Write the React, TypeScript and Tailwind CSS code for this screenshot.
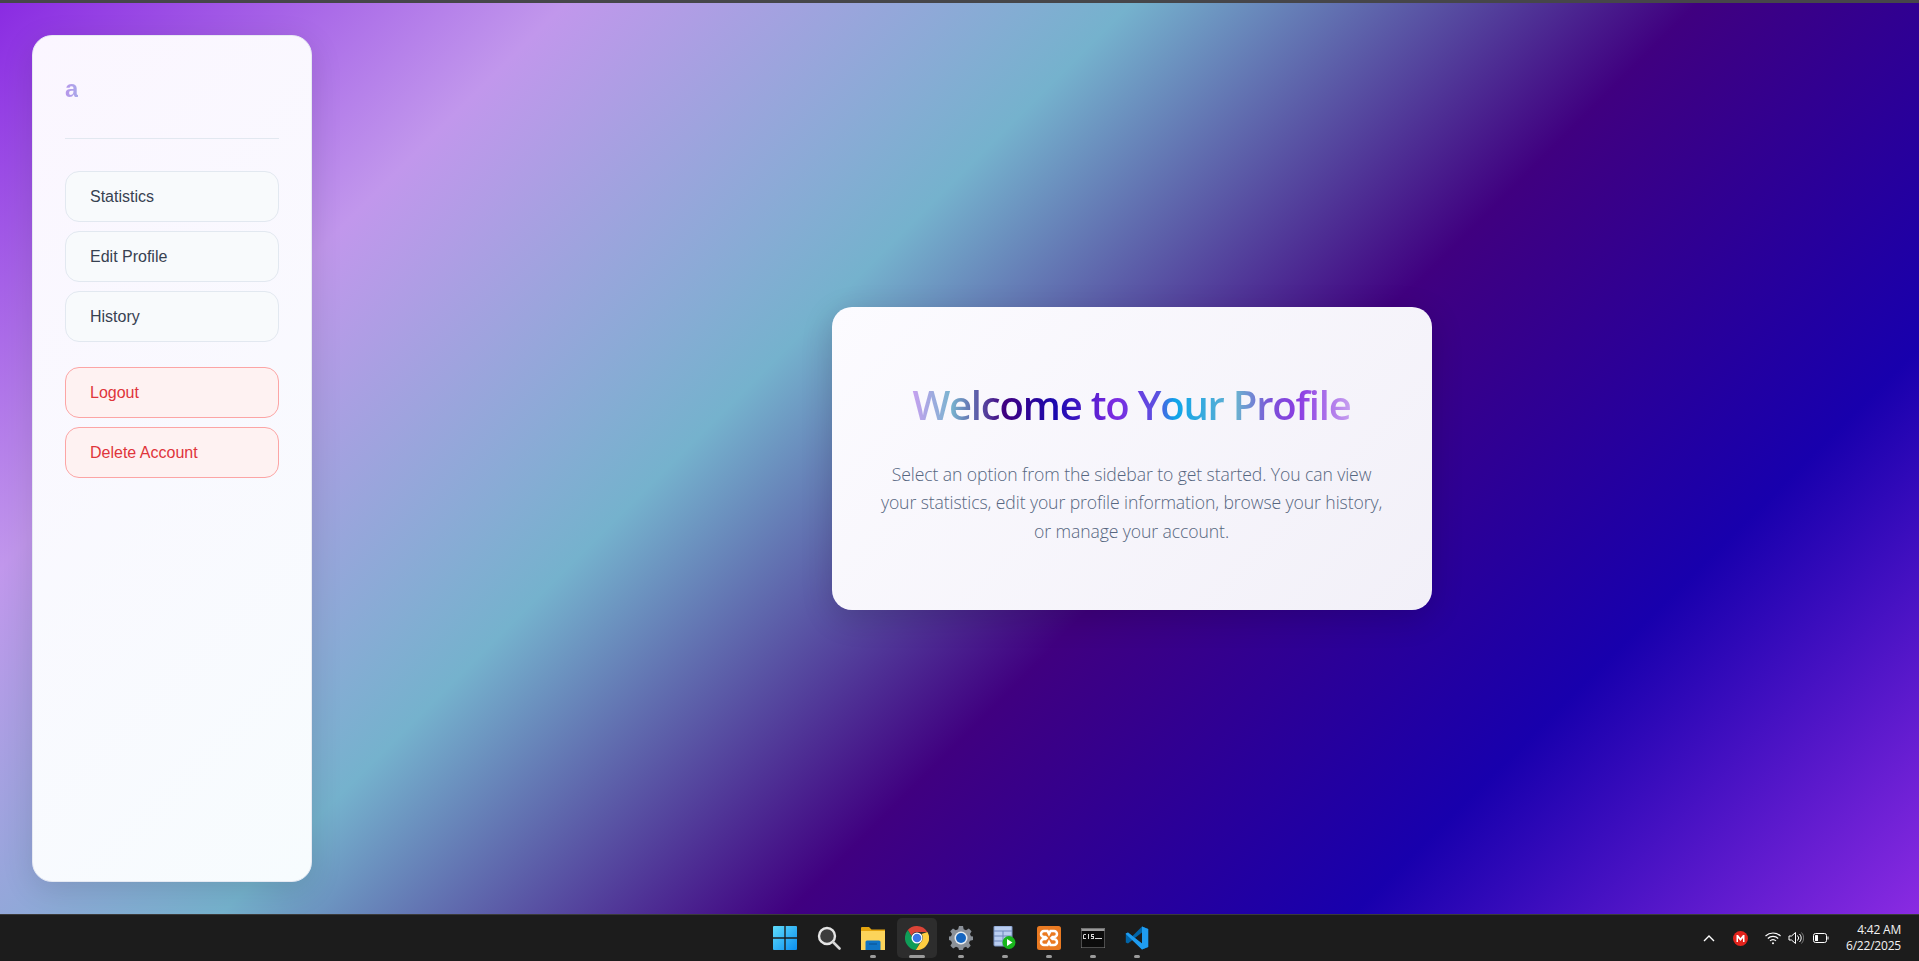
import React from "react";

const navItems = ["Statistics", "Edit Profile", "History"];
const dangerItems = ["Logout", "Delete Account"];

const WindowsIcon = () => (
  <svg width="24" height="24" viewBox="0 0 24 24">
    <defs>
      <linearGradient id="win" x1="0" y1="0" x2="1" y2="1">
        <stop offset="0" stopColor="#5fdcfb" />
        <stop offset="1" stopColor="#0b8ef0" />
      </linearGradient>
    </defs>
    <path fill="url(#win)" d="M0 1a1 1 0 0 1 1-1h10.3v11.3H0zM12.7 0H23a1 1 0 0 1 1 1v10.3H12.7zM0 12.7h11.3V24H1a1 1 0 0 1-1-1zM12.7 12.7H24V23a1 1 0 0 1-1 1H12.7z" />
  </svg>
);

const SearchIcon = () => (
  <svg width="24" height="24" viewBox="0 0 24 24" fill="none">
    <circle cx="10" cy="10" r="8" fill="#3c3c3c" stroke="#e4e4e4" strokeWidth="2.4" />
    <path d="M16 16l6.5 6.5" stroke="#d6d6d6" strokeWidth="2.6" strokeLinecap="round" />
  </svg>
);

const FolderIcon = () => (
  <svg width="24" height="24" viewBox="0 0 24 24">
    <path fill="#e5a50f" d="M0 2a1 1 0 0 1 1-1h7l2.5 2.5H24V9H0z" />
    <path fill="#fcd45a" d="M0 5h24v19H0z" />
    <path fill="#0f74c4" d="M4.500 16a1.500 1.500 0 0 1 1.500-1.500h12a1.500 1.500 0 0 1 1.500 1.500v8h-15z" />
    <path fill="#0a4f8f" d="M8 17.500h8v1H8z" />
  </svg>
);

const ChromeIcon = () => (
  <svg width="24" height="24" viewBox="0 0 48 48">
    <path fill="#db4437" d="M24 0a24 24 0 0 1 20.800 12H24a12 12 0 0 0-11.300 8L5.600 8.100A24 24 0 0 1 24 0z" />
    <path fill="#0f9d58" d="M3.200 36A24 24 0 0 1 5.600 8.100L15 24a10 10 0 0 0 14.500 9.500L21.500 48A24 24 0 0 1 3.200 36z" />
    <path fill="#ffcd40" d="M44.800 12A24 24 0 0 1 21.500 48l9.500-15A12 12 0 0 0 33 16z" />
    <circle cx="24" cy="24" r="11" fill="#fff" />
    <circle cx="24" cy="24" r="8.500" fill="#3b78e7" />
  </svg>
);

const GearIcon = () => (
  <svg width="24" height="24" viewBox="0 0 24 24">
    <path fill="#8b9199" d="M10 0h4l.7 3.200 2.300 1 2.800-1.700 2.800 2.800L21 8l1 2.300L24 10.500v3.500l-3 .7-1 2.300 1.700 2.800-2.800 2.800L17 20.800l-2.300 1L14 24h-4l-.7-2.200-2.300-1-2.800 1.700-2.800-2.800L3 17l-1-2.300L0 14v-3.500l2-.2 1-2.300-1.800-2.700L4 2.500 6.800 4.200 9.100 3.200z" />
    <circle cx="12" cy="12" r="6.500" fill="#e8edf2" />
    <circle cx="12" cy="12" r="5" fill="#1565c0" />
  </svg>
);

const TableIcon = () => (
  <svg width="24" height="24" viewBox="0 0 24 24">
    <rect x="1" y="0" width="18" height="20" rx="1" fill="#b9cdf0" stroke="#7d95c4" />
    <path d="M1 5h18M1 10h18M1 15h18M10 5v15" stroke="#6f88bb" strokeWidth="1" />
    <circle cx="16" cy="16.500" r="6.500" fill="#18b51c" />
    <path d="M14 13l5.500 3.500L14 20z" fill="#fff" />
  </svg>
);

const XamppIcon = () => (
  <svg width="24" height="24" viewBox="0 0 24 24" fill="none">
    <rect width="24" height="24" rx="2.500" fill="#ea7a22" />
    <path d="M7 5h3.500L12 8l1.500-3H17a2.500 2.500 0 0 1 0 6h-1.500l-1 1 1 1H17a2.500 2.500 0 0 1 0 6h-3.500L12 16l-1.500 3H7a2.500 2.500 0 0 1 0-6h1.500l1-1-1-1H7a2.500 2.500 0 0 1 0-6z" stroke="#fff" strokeWidth="2.500" />
  </svg>
);

const TerminalIcon = () => (
  <svg width="24" height="20" viewBox="0 0 24 20">
    <rect width="24" height="20" fill="#0c0c0c" stroke="#8c8c8c" />
    <rect x="0.500" y="0.500" width="23" height="2.500" fill="#9a9a9a" />
    <path d="M3 6h2v1H3v3h2v1H2V7zM7 6h1v5H7zM10 6h3v1h-2v1h2v3h-3v-1h2V9h-2zM14 10h7v1h-7z" fill="#d9d9d9" />
  </svg>
);

const VscodeIcon = () => (
  <svg width="24" height="24" viewBox="0 0 24 24">
    <path fill="#0065a9" d="M17 0.500 7.500 10 3 6.500 0.800 7.600v8.800L3 17.500 7.500 14l9.500 9.500 6.200-2.500V3zM17 6.500v11L9.800 12z" />
    <path fill="#1f9cf0" d="M17 0.500 23.200 3v18L17 23.500zM0.800 7.600 3 6.500 17 17.500V23.500L0.800 8z" />
  </svg>
);

const taskIcons = [
  { icon: <WindowsIcon />, dot: "" },
  { icon: <SearchIcon />, dot: "" },
  { icon: <FolderIcon />, dot: "w-[6px]" },
  { icon: <ChromeIcon />, dot: "w-[16px]", active: true },
  { icon: <GearIcon />, dot: "w-[6px]" },
  { icon: <TableIcon />, dot: "w-[6px]" },
  { icon: <XamppIcon />, dot: "w-[6px]" },
  { icon: <TerminalIcon />, dot: "w-[6px]" },
  { icon: <VscodeIcon />, dot: "w-[6px]" },
];

const Taskbar = () => (
  <div className="relative flex h-[47px] shrink-0 items-center justify-center border-t border-[#3a3a3a] bg-[#1c1c1c] pl-[2px]">
    <div className="flex">
      {taskIcons.map((item, i) => (
        <div key={i} className="flex h-[46px] w-[44px] items-center justify-center">
          <div
            className={
              "relative flex h-[40px] w-[40px] items-center justify-center rounded-[5px] " +
              (item.active ? "bg-[#2d2d2d]" : "")
            }
          >
            {item.icon}
            {item.dot && (
              <span className={"absolute bottom-0 h-[3px] rounded-full bg-[#9b9b9b] " + item.dot} />
            )}
          </div>
        </div>
      ))}
    </div>
    <div className="absolute right-[18px] top-0 flex h-[46px] items-center text-white">
      <svg width="12" height="8" viewBox="0 0 12 8" fill="none" className="mr-[18px]">
        <path d="M1 7l5-5 5 5" stroke="#fff" strokeWidth="1.400" />
      </svg>
      <span className="mr-[17px] flex h-[15px] w-[15px] items-center justify-center rounded-full bg-[#e3231c]">
        <svg width="9" height="7" viewBox="0 0 9 7">
          <path d="M0.500 7V0h1.500l2.500 3 2.500-3h1.500v7H7V3L4.500 6 2 3v4z" fill="#fff" />
        </svg>
      </span>
      <svg width="16" height="14" viewBox="0 0 16 14" fill="none" stroke="#fff" strokeWidth="1.100" className="mr-[7px]">
        <path d="M0.500 5a11 11 0 0 1 15 0M2.800 7.500a7.500 7.500 0 0 1 10.400 0M5 10a4 4 0 0 1 6 0" />
        <circle cx="8" cy="12.300" r="1" fill="#fff" stroke="none" />
      </svg>
      <svg width="16" height="14" viewBox="0 0 16 14" fill="none" stroke="#fff" strokeWidth="1" className="mr-[9px]">
        <path d="M1 5h2.500L7.500 1.500v11L3.500 9H1zM9.500 4.500a3.500 3.500 0 0 1 0 5M11.500 3a5.500 5.500 0 0 1 0 8" />
        <path d="M13.500 1.500a8 8 0 0 1 0 11" stroke="#777" />
      </svg>
      <svg width="16" height="10" viewBox="0 0 16 10" fill="none" className="mr-[17px]">
        <rect x="0.500" y="0.500" width="13" height="9" rx="2" stroke="#fff" />
        <rect x="2" y="2" width="3" height="6" rx="0.500" fill="#fff" />
        <path d="M14.500 3.500h1v3h-1z" fill="#fff" />
      </svg>
      <div className="text-right font-['Open_Sans','Noto_Sans',sans-serif] text-[12px] leading-[16px] tracking-[-0.2px] text-[#f3f3f3]">
        <div>4:42 AM</div>
        <div>6/22/2025</div>
      </div>
    </div>
  </div>
);

export default function App() {
  return (
    <div className="flex h-screen flex-col overflow-hidden bg-[#1c1c1c]">
      <div className="h-[3px] shrink-0 bg-[#46464a]" />
      <main className="flex min-h-0 flex-1 bg-[linear-gradient(135deg,#8a2be2_0%,#c197ec_20%,#75b2cd_40%,#400080_60%,#1800ad_80%,#8a2be2_100%)]">
        <aside className="my-8 ml-8 flex w-[280px] shrink-0 flex-col rounded-[20px] border border-[#e6e9f2] bg-[linear-gradient(135deg,#fbf6ff,#f7fcfe)] p-8 shadow-[0_8px_32px_rgba(0,0,0,0.12)]">
          <div className="h-[71px] border-b border-[#e2e8f0] font-['Liberation_Sans',Arial,sans-serif] text-2xl leading-[42px] font-bold">
            <span className="bg-[linear-gradient(90deg,#b795ea,#a9a9ea)] bg-clip-text text-transparent">a</span>
          </div>
          <nav className="mt-8 flex flex-col gap-[9px] font-['Liberation_Sans',Arial,sans-serif]">
            {navItems.map((label) => (
              <button
                key={label}
                className="h-[51px] rounded-[14px] border border-[#e2e8f0] bg-[#f8fafc] pl-[24px] text-left text-base text-[#374151]"
              >
                {label}
              </button>
            ))}
            <div className="h-[7px]" />
            {dangerItems.map((label) => (
              <button
                key={label}
                className="h-[51px] rounded-[14px] border border-[#fca5a5] bg-[#fef2f2] pl-[24px] text-left text-base text-[#e0353b]"
              >
                {label}
              </button>
            ))}
          </nav>
        </aside>
        <div className="flex flex-1 items-center justify-center pl-8">
          <div className="w-[600px] rounded-[20px] bg-[linear-gradient(135deg,#fcfbff,#f2f0f8)] px-12 py-16 text-center shadow-[0_8px_32px_rgba(0,0,0,0.16)]">
            <h1 className="font-['Open_Sans',sans-serif] text-[40px] leading-[68px] font-semibold tracking-[-1.2px]">
              <span className="bg-[linear-gradient(90deg,#c7a0f0_0%,#78b4cf_9%,#400080_21%,#1a0ab0_33%,#7c2be2_46%,#5a50e0_56%,#0ea5e9_60%,#6ab0d0_74%,#7c50d8_82%,#8a3be2_88%,#c7a0f0_100%)] bg-clip-text text-transparent">
                Welcome to Your Profile
              </span>
            </h1>
            <p className="mt-[20.600px] font-['Open_Sans',sans-serif] text-[17.600px] leading-[28.800px] font-light tracking-[-0.09px] whitespace-nowrap text-[#566680]">
              Select an option from the sidebar to get started. You can view
              <br />
              your statistics, edit your profile information, browse your history,
              <br />
              or manage your account.
            </p>
          </div>
        </div>
      </main>
      <Taskbar />
    </div>
  );
}
